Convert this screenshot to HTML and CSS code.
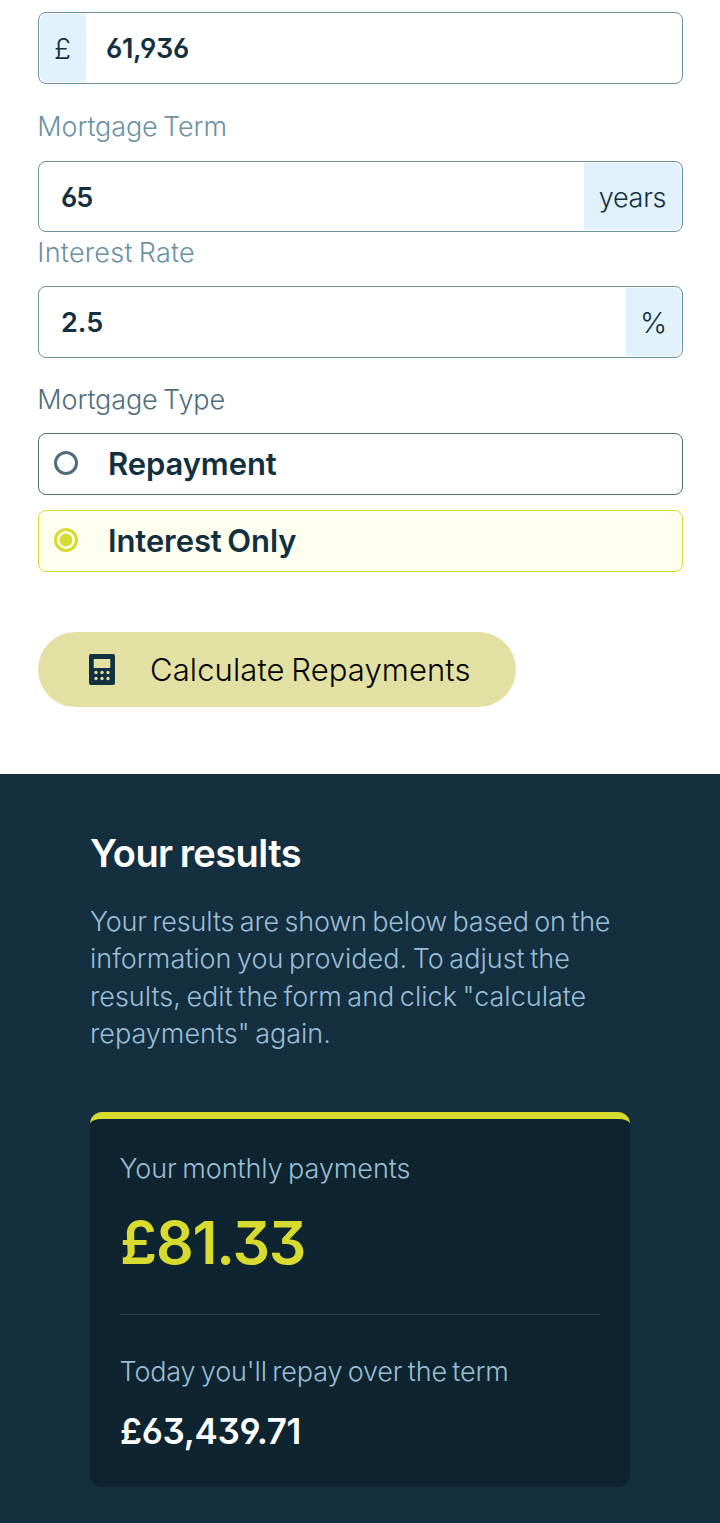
FILE: index.html
```html
<!DOCTYPE html>
<html lang="en">
<head>
<meta charset="utf-8">
<title>Mortgage repayment calculator</title>
<link rel="stylesheet" href="styles.css">
</head>
<body>
<form class="form">
  <div class="field"><span class="unit unit-pound">£</span><span class="value amount">61,936</span></div>
  <div class="label label-term">Mortgage Term</div>
  <div class="field field-term"><span class="value years">65</span><span class="unit unit-years">years</span></div>
  <div class="label label-rate">Interest Rate</div>
  <div class="field"><span class="value rate">2.5</span><span class="unit unit-percent">%</span></div>
  <div class="label label-type">Mortgage Type</div>
  <div class="option"><span class="radio"></span><span class="option-text repayment">Repayment</span></div>
  <div class="option selected"><span class="radio"></span><span class="option-text interest">Interest Only</span></div>
  <button type="button" class="submit">
    <svg class="calc" viewBox="0 0 26 31" width="26" height="31"><path fill="#133041" fill-rule="evenodd" d="M2 0h22a2 2 0 0 1 2 2v27a2 2 0 0 1-2 2H2a2 2 0 0 1-2-2V2a2 2 0 0 1 2-2zM5.500 5a.8.8 0 0 0-.8.8v7.400a.8.8 0 0 0 .8.8h15a.8.8 0 0 0 .8-.8V5.800a.8.8 0 0 0-.8-.8z"/><g fill="#e2e1a3"><circle cx="7" cy="18.500" r="1.650"/><circle cx="13" cy="18.500" r="1.650"/><circle cx="19" cy="18.500" r="1.650"/><circle cx="7" cy="24.500" r="1.650"/><circle cx="13" cy="24.500" r="1.650"/><circle cx="19" cy="24.500" r="1.650"/></g></svg>
    <span class="submit-text">Calculate Repayments</span>
  </button>
</form>
<section class="results">
  <h2 class="title">Your results</h2>
  <p class="intro"><span class="line l1">Your results are shown below based on the</span> <span class="line l2">information you provided. To adjust the</span> <span class="line l3">results, edit the form and click "calculate</span> <span class="line l4">repayments" again.</span></p>
  <div class="card">
    <div class="caption monthly-label">Your monthly payments</div>
    <div class="monthly">£81.33</div>
    <div class="divider"></div>
    <div class="caption total-label">Today you'll repay over the term</div>
    <div class="total">£63,439.71</div>
  </div>
</section>
</body>
</html>
```
FILE: styles.css
```css
* { box-sizing: border-box; }
body { margin: 0; background: #fff; font-family: Inter, "Liberation Sans", sans-serif; font-feature-settings: "cv03", "cv04", "cv09"; color: #133041; }
.form { height: 774px; padding: 12px 37px 0 38px; }
.field { display: flex; height: 72px; border: 1px solid #6b91a3; border-radius: 8px; padding: 1px; overflow: hidden; white-space: nowrap; }
.field-term { height: 71px; }
.unit { display: flex; align-items: center; justify-content: center; background: #e2f2fc; font-size: 27px; font-weight: 300; padding-top: 2px; }
.unit-pound { width: 46px; padding-right: 1px; border-radius: 6px 0 0 6px; font-size: 28px; }
.unit-years { width: 97px; border-radius: 0 6px 6px 0; letter-spacing: -.3px; padding-top: 1px; }
.unit-percent { width: 55px; border-radius: 0 6px 6px 0; font-size: 29px; padding-top: 1px; }
.value { flex: 1; display: flex; align-items: center; padding-left: 21px; font-size: 27px; font-weight: 600; }
.amount { padding-left: 20px; letter-spacing: -.3px; }
.years { padding-top: 2px; letter-spacing: -1px; }
.label { height: 38px; line-height: 38px; font-size: 27px; font-weight: 300; letter-spacing: -.12px; word-spacing: -2px; color: #6b91a3; white-space: nowrap; text-indent: -.7px; }
.label-term { margin: 24px 0 15px; }
.label-rate { margin: 2px 0 14px; letter-spacing: .27px; }
.label-type { margin: 23px 0 14px; color: #4e6e7e; }
.option { display: flex; align-items: center; height: 62px; padding-left: 15px; border: 1px solid #4e6e7e; border-radius: 8px; white-space: nowrap; }
.selected { margin-top: 15px; border-color: #d8db2f; background: #feffef; }
.radio { width: 24px; height: 24px; margin: -2px 30px 0 0; border: 3px solid #4e6e7e; border-radius: 50%; }
.selected .radio { border-color: #d8db2f; background: radial-gradient(circle at center, #d8db2f 6px, #feffef 6.800px); }
.option-text { padding-bottom: 2px; font-size: 31px; font-weight: 600; word-spacing: -2px; letter-spacing: -.1px; }
.submit { display: flex; align-items: center; width: 478px; height: 75px; margin-top: 60px; padding: 0 0 0 50.500px; border: 0; border-radius: 38px; background: #e2e1a3; font-family: inherit; color: #000; }
.calc { flex: none; margin-right: 35.500px; }
.submit-text { font-size: 31px; font-weight: 300; white-space: nowrap; word-spacing: -2px; letter-spacing: .1px; }
.results { height: 749px; padding: 54px 90px 0; background: #142f40; }
.title { margin: 0; height: 50px; line-height: 50px; font-size: 38px; font-weight: 600; letter-spacing: -.55px; word-spacing: -2px; color: #fff; white-space: nowrap; }
.intro { margin: 24.500px 0 0; font-size: 27px; font-weight: 300; line-height: 37.500px; word-spacing: -2px; color: #9abed5; }
.line { display: block; white-space: nowrap; }
.l1 { letter-spacing: -.17px; }
.card { height: 375px; margin-top: 59.500px; padding: 31px 30px 0; border-top: 7px solid #d8db2f; border-radius: 12px; background: #0e2430; white-space: nowrap; }
.caption { height: 38px; line-height: 38px; font-size: 27px; font-weight: 300; letter-spacing: -.07px; word-spacing: -2px; color: #9abed5; text-indent: -.5px; }
.monthly { height: 75px; margin-top: 17px; line-height: 75px; font-size: 59px; font-weight: 600; letter-spacing: -1.200px; color: #d8db2f; }
.divider { height: 1px; margin-top: 34px; background: #2b424e; }
.total-label { margin-top: 38px; letter-spacing: -.16px; }
.total { height: 46px; margin-top: 17px; line-height: 46px; font-size: 35px; font-weight: 600; letter-spacing: -.35px; color: #fff; }
```
